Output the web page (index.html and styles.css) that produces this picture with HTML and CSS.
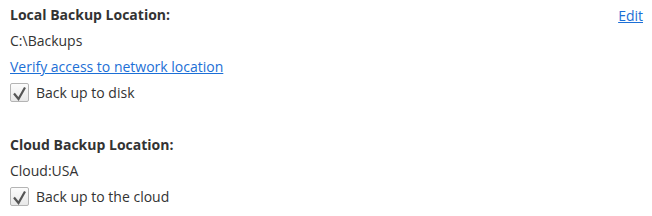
FILE: index.html
```html
<!DOCTYPE html>
<html>
<head>
<meta charset="utf-8">
<link rel="stylesheet" href="styles.css">
</head>
<body>
<div class="panel">
  <section class="group">
    <div class="head">
      <h2 class="title">Local Backup Location:</h2>
      <a class="link edit" href="#">Edit</a>
    </div>
    <div class="row">C:\Backups</div>
    <div class="row"><a class="link" href="#">Verify access to network location</a></div>
    <label class="row check"><span class="box"><svg viewBox="0 0 17 17" width="17" height="17"><path d="M3 9.5 L7.5 15 L14 3.5" fill="none" stroke="#555" stroke-width="2.2" stroke-linejoin="miter"/></svg></span>Back up to disk</label>
  </section>
  <section class="group cloud">
    <div class="head">
      <h2 class="title">Cloud Backup Location:</h2>
    </div>
    <div class="row">Cloud:USA</div>
    <label class="row check"><span class="box"><svg viewBox="0 0 17 17" width="17" height="17"><path d="M3 9.5 L7.5 15 L14 3.5" fill="none" stroke="#555" stroke-width="2.2" stroke-linejoin="miter"/></svg></span>Back up to the cloud</label>
  </section>
</div>
</body>
</html>
```
FILE: styles.css
```css
html, body { margin: 0; padding: 0; background: #fff; }
body { font-family: "Open Sans", "Noto Sans", sans-serif; font-size: 14px; color: #333; }
.panel { padding: 1px 9px 0 10px; }
.group { display: flex; flex-direction: column; }
.cloud { margin-top: 26px; }
.head { display: flex; justify-content: space-between; align-items: center; height: 26px; }
.title { margin: 0; font-size: 14px; font-weight: bold; color: #333; }
.edit { margin-top: 2px; }
.row { height: 26px; display: flex; align-items: center; }
.link { color: #1c6fd6; text-decoration: underline; }
.check { gap: 7px; }
.box { width: 17px; height: 17px; border: 1px solid #b4b4b4; border-radius: 2px; background: linear-gradient(#fcfcfc, #e8e8e8); display: flex; }
.box svg { display: block; width: 17px; height: 17px; }
```
